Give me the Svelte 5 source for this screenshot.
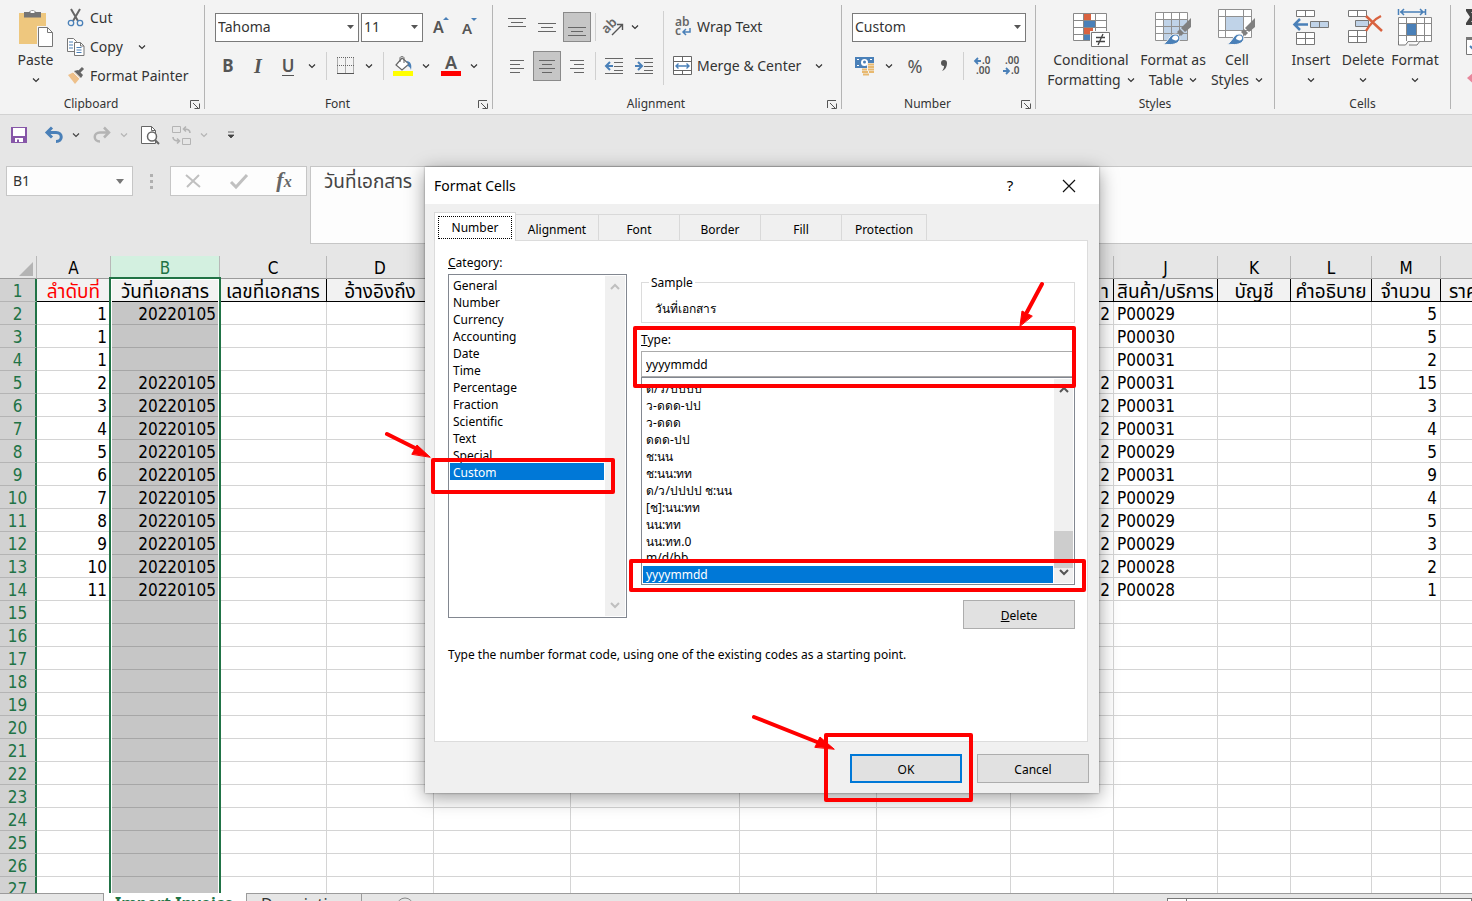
<script>
  const columns = [
    { id: 'A', width: 74, title: 'ลำดับที่' },
    { id: 'B', width: 109, title: 'วันที่เอกสาร' },
    { id: 'C', width: 107, title: 'เลขที่เอกสาร' },
    { id: 'D', width: 107, title: 'อ้างอิงถึง' },
    { id: 'E', width: 137, title: '' },
    { id: 'F', width: 169, title: '' },
    { id: 'G', width: 137, title: '' },
    { id: 'H', width: 134, title: '' },
    { id: 'I', width: 103, title: 'า' },
    { id: 'J', width: 104, title: 'สินค้า/บริการ' },
    { id: 'K', width: 73, title: 'บัญชี' },
    { id: 'L', width: 81, title: 'คำอธิบาย' },
    { id: 'M', width: 69, title: 'จำนวน' },
    { id: 'N', width: 120, title: 'ราคาต่อหน่วย' }
  ];
  const D = '20220105';
  const data = [
    { A: 1, B: D, I: 2, J: 'P00029', M: 5 },
    { A: 1, J: 'P00030', M: 5 },
    { A: 1, J: 'P00031', M: 2 },
    { A: 2, B: D, I: 2, J: 'P00031', M: 15 },
    { A: 3, B: D, I: 2, J: 'P00031', M: 3 },
    { A: 4, B: D, I: 2, J: 'P00031', M: 4 },
    { A: 5, B: D, I: 2, J: 'P00029', M: 5 },
    { A: 6, B: D, I: 2, J: 'P00031', M: 9 },
    { A: 7, B: D, I: 2, J: 'P00029', M: 4 },
    { A: 8, B: D, I: 2, J: 'P00029', M: 5 },
    { A: 9, B: D, I: 2, J: 'P00029', M: 3 },
    { A: 10, B: D, I: 2, J: 'P00028', M: 2 },
    { A: 11, B: D, I: 2, J: 'P00028', M: 1 }
  ];
  const rows = Array.from({ length: 26 }, (_, i) => data[i] ?? {});
  const categories = ['General', 'Number', 'Currency', 'Accounting', 'Date', 'Time', 'Percentage', 'Fraction', 'Scientific', 'Text', 'Special', 'Custom'];
  const formats = ['ด/ว/ปปปป', 'ว-ดดด-ปป', 'ว-ดดด', 'ดดด-ปป', 'ช:นน', 'ช:นน:ทท', 'ด/ว/ปปปป ช:นน', '[ช]:นน:ทท', 'นน:ทท', 'นน:ทท.0', 'm/d/bb', 'yyyymmdd'];
  const tabs = ['Number', 'Alignment', 'Font', 'Border', 'Fill', 'Protection'];
  let category = $state('Custom');
  let format = $state('yyyymmdd');
  let tab = $state('Number');
</script>

{#snippet chev()}
  <svg class="chev" width="8" height="6" viewBox="0 0 8 6"><path d="M1 1.5 4 4.5 7 1.5" fill="none" stroke="currentColor" stroke-width="1.2" /></svg>
{/snippet}

{#snippet foot(name, launch)}
  <div class="foot" class:launches={launch}>
    <span>{name}</span>
    {#if launch}
      <button class="launch" aria-label={name + ' settings'}>
        <svg width="11" height="10" viewBox="0 0 11 10"><path d="M.5 8V.5H9M3 3l5 5M9.500 3.500V8.500H4.500" fill="none" stroke="#555" /></svg>
      </button>
    {/if}
  </div>
{/snippet}

{#snippet lines(list)}
  <svg width="18" height="18" viewBox="0 0 18 18"><path d={list} stroke="#666" fill="none" /></svg>
{/snippet}

{#snippet brush()}
  <path d="M38 10v9l-6 5-4-4z" fill="#808080" /><path d="m27 21 4 4-3 3-4-4z" fill="#808080" />
  <path d="M10 36c5-1 6-10 12-10 4 0 6 4 4 7-3 4-9 4-16 3z" fill="#4a80b8" stroke="#f3f3f3" /><path d="M19 31c0-3 4-5 6-2 1 3-2 4-4 3" fill="#fff" />
{/snippet}

<div class="app">
  <div class="ribbon">
    <section class="group clipboard">
      <div class="body">
        <button class="big paste">
          <svg width="36" height="40" viewBox="21 8 36 40">
            <path d="M22 13h27v31H22z" fill="#eec77e" /><path d="M27 17.500V12h5a4 3.500 0 0 1 7 0h5v5.500z" fill="#757575" /><path d="M33.500 12h4" stroke="#fff" stroke-width="2" />
            <path d="M40 26h18v23H40z" fill="#f3f3f3" /><path d="M41.500 27.500h9l5 5v14h-14z" fill="#fff" stroke="#777" /><path d="M50.500 27.500v5h5" fill="none" stroke="#777" />
          </svg>
          <span>Paste</span><span>{@render chev()}</span>
        </button>
        <div class="stack">
          <button class="line">
            <svg width="18" height="18" viewBox="0 0 18 18"><path d="M4 0l7 12M13 0 6 12" stroke="#666" stroke-width="2" /><circle cx="4" cy="14" r="2.700" fill="none" stroke="#4a80b8" stroke-width="1.300" /><circle cx="13" cy="14" r="2.700" fill="none" stroke="#4a80b8" stroke-width="1.300" /></svg>
            Cut
          </button>
          <button class="line">
            <svg width="18" height="18" viewBox="0 0 18 18"><path d="M.5.5h6l3 3v10h-9z" fill="#fff" stroke="#777" /><path d="M2 4h4M2 7h4M2 10h4" stroke="#4a80b8" /><path d="M7.500 4.500h6l3.500 3.500v9.500H7.500z" fill="#fff" stroke="#777" /><path d="M13.500 4.500V8H17" fill="none" stroke="#777" /><path d="M9.500 9.500h5M9.500 12h5M9.500 14.500h5" stroke="#4a80b8" /></svg>
            Copy <i class="far">{@render chev()}</i>
          </button>
          <button class="line">
            <svg width="18" height="18" viewBox="0 0 18 18"><path d="m1 8 6-3 6 6-5 6z" fill="#eec08a" /><path d="m7 4 7 7 2-3-5-5z" fill="#666" /><path d="m12 5 4-4" stroke="#666" stroke-width="3" /><path d="m6 5 7 7" stroke="#f3f3f3" /></svg>
            Format Painter
          </button>
        </div>
      </div>
      {@render foot('Clipboard', true)}
    </section>

    <section class="group font">
      <div class="body rows">
        <div class="row">
          <select class="face" aria-label="Font"><option>Tahoma</option></select>
          <select class="size" aria-label="Font size"><option>11</option></select>
          <button class="tool" aria-label="Increase font size"><svg width="18" height="20" viewBox="0 0 18 20"><text x="2" y="16" font-size="16" font-weight="600" fill="#555">A</text><path d="M12 3l3-3 3 3z" fill="#4a80b8" /></svg></button>
          <button class="tool" aria-label="Decrease font size"><svg width="18" height="20" viewBox="0 0 18 20"><text x="3" y="17" font-size="15" font-weight="600" fill="#555">A</text><path d="M12 1h6l-3 3z" fill="#4a80b8" /></svg></button>
        </div>
        <div class="row tight">
          <button class="tool glyph"><b>B</b></button>
          <button class="tool glyph"><b class="ital">I</b></button>
          <button class="tool glyph"><b class="under">U</b></button>
          <button class="drop" aria-label="Underline styles">{@render chev()}</button>
          <hr />
          <button class="tool" aria-label="Borders"><svg width="18" height="18" viewBox="0 0 18 18"><path d="M.5.5v16M16.500.5v16M8.500.5v16M0 .5h17M0 8.500h17" stroke="#666" stroke-dasharray="1 1" /><path d="M0 16.500h17" stroke="#555" stroke-width="1" /></svg></button>
          <button class="drop" aria-label="Border styles">{@render chev()}</button>
          <hr />
          <button class="tool" aria-label="Fill colour"><svg width="20" height="20" viewBox="0 0 20 20"><path d="M0 15h20v5H0z" fill="#ff0" /><path d="m9 2 7 6-7 6-6-5z" fill="#fff" stroke="#666" stroke-width="1.200" /><path d="M7 6V2c0-2 4-2 4 0v5" fill="none" stroke="#666" /><path d="M13 5c5 0 6 4 5 9-1-3-2-4-4-4l2-2z" fill="#4a80b8" /></svg></button>
          <button class="drop" aria-label="Fill colours">{@render chev()}</button>
          <button class="tool ink" aria-label="Font colour"><svg width="20" height="20" viewBox="0 0 20 20"><text x="4" y="13" font-size="18" font-weight="600" fill="#555">A</text><path d="M0 15h20v5H0z" fill="red" /></svg></button>
          <button class="drop" aria-label="Font colours">{@render chev()}</button>
        </div>
      </div>
      {@render foot('Font', true)}
    </section>

    <section class="group alignment">
      <div class="body">
        <div class="rows">
          <div class="row aligns">
            <button class="tool" aria-label="Top align">{@render lines('M0 .5h18M3 4.500h12M0 8.500h18')}</button>
            <button class="tool" aria-label="Middle align">{@render lines('M0 5.500h18M3 9.500h12M0 13.500h18')}</button>
            <button class="tool on" aria-label="Bottom align">{@render lines('M0 9.500h18M3 13.500h12M0 17.500h18')}</button>
            <hr />
            <button class="tool" aria-label="Orientation"><svg width="20" height="18" viewBox="0 0 20 18"><text x="0" y="14" font-size="13" font-weight="600" fill="#666" transform="rotate(-45 4 12)">ab</text><path d="m8 17 10-10M13 6.500h5.500V12" fill="none" stroke="#555" stroke-width="1.400" /></svg></button>
            <button class="drop" aria-label="Orientation options">{@render chev()}</button>
          </div>
          <div class="row aligns">
            <button class="tool" aria-label="Align left">{@render lines('M2 3.500h14M2 7.500h10M2 11.500h14M2 15.500h10')}</button>
            <button class="tool on" aria-label="Center">{@render lines('M1 3.500h16M4 7.500h10M1 11.500h16M4 15.500h10')}</button>
            <button class="tool" aria-label="Align right">{@render lines('M2 3.500h14M6 7.500h10M2 11.500h14M6 15.500h10')}</button>
            <hr />
            <button class="tool" aria-label="Decrease indent"><svg width="18" height="18" viewBox="0 0 18 18"><path d="M0 1.500h18M9 5.500h9M9 9.500h9M9 13.500h9M0 16.500h18" stroke="#666" /><path d="M8 9H2M5 5 1 9l4 4" fill="none" stroke="#4a80b8" stroke-width="2" /></svg></button>
            <button class="tool" aria-label="Increase indent"><svg width="18" height="18" viewBox="0 0 18 18"><path d="M0 1.500h18M9 5.500h9M9 9.500h9M9 13.500h9M0 16.500h18" stroke="#666" /><path d="M0 9h6M3 5l4 4-4 4" fill="none" stroke="#4a80b8" stroke-width="2" /></svg></button>
          </div>
        </div>
        <hr class="tall" />
        <div class="rows wraps">
          <button class="row line">
            <svg width="20" height="20" viewBox="0 0 20 20"><text x="2" y="9" font-size="12" font-weight="600" fill="#666">ab</text><text x="2" y="18" font-size="12" font-weight="600" fill="#666">c</text><path d="M17 11v4h-6M13 12l-3 3 3 3" fill="none" stroke="#4a80b8" stroke-width="1.500" /></svg>
            Wrap Text
          </button>
          <button class="row line">
            <svg width="20" height="20" viewBox="0 0 20 20"><path d="M.5.5h18v18H.5zM.5 5.500h18M.5 14.500h18M9.500.5v5M9.500 14.500v4" fill="#fff" stroke="#666" /><path d="M3 10h13M5.500 7.500 3 10l2.500 2.500M13.500 7.500 16 10l-2.500 2.500" fill="none" stroke="#4a80b8" stroke-width="1.400" /></svg>
            Merge &amp; Center <i class="far">{@render chev()}</i>
          </button>
        </div>
      </div>
      {@render foot('Alignment', true)}
    </section>

    <section class="group number">
      <div class="body rows">
        <div class="row"><select class="fmt" aria-label="Number format"><option>Custom</option></select></div>
        <div class="row spaced">
          <button class="tool" aria-label="Accounting format"><svg width="20" height="20" viewBox="0 0 20 20"><path d="M0 1h19v11H0z" fill="#4a80b8" /><path d="M2 3.500h2M2 9.500h2M15 3.500h2" stroke="#fff" /><circle cx="9.500" cy="6.500" r="3.500" fill="#fff" /><circle cx="9.500" cy="6" r="1.500" fill="#4a80b8" /><path d="M12 7h8v7h-3v6H6v-8h6z" fill="#f3f3f3" /><path d="M13 8.500h6M13 11h6M13 13.500h6M7 13.500h5M7 16h6M8 18.500h6M14 16h5" stroke="#e8b970" stroke-width="1.800" /></svg></button>
          <button class="drop" aria-label="Accounting formats">{@render chev()}</button>
          <button class="tool pct">%</button>
          <button class="tool comma" aria-label="Comma style"><svg width="8" height="12" viewBox="0 0 8 12"><path d="M1 3a3 3 0 0 1 6 0c0 4-2 7-5 8 1.500-2 2-3 2-5-2 0-3-1-3-3z" fill="#555" /></svg></button>
          <hr />
          <button class="tool" aria-label="Increase decimal"><svg width="18" height="20" viewBox="0 0 18 20"><path d="M1 5h6M4 2 1 5l3 3" fill="none" stroke="#4a80b8" stroke-width="1.800" /><text x="8" y="8" font-size="10" font-weight="600" fill="#555">.0</text><text x="2" y="18" font-size="10" font-weight="600" fill="#555">.00</text></svg></button>
          <button class="tool" aria-label="Decrease decimal"><svg width="18" height="20" viewBox="0 0 18 20"><path d="M0 15h6M3 12l3 3-3 3" fill="none" stroke="#4a80b8" stroke-width="1.800" /><text x="2" y="8" font-size="10" font-weight="600" fill="#555">.00</text><text x="8" y="18" font-size="10" font-weight="600" fill="#555">.0</text></svg></button>
        </div>
      </div>
      {@render foot('Number', true)}
    </section>

    <section class="group styles">
      <div class="body">
        <button class="big">
          <svg width="40" height="40" viewBox="0 0 40 40"><path d="M2.500 5.500h33v27h-33z" fill="#fff" /><path d="M13 6h7v6h-7zM13 20h9v6h-9z" fill="#d9623f" /><path d="M13 13h11v6H13zM13 27h6v6h-6z" fill="#4a80b8" /><path d="M2.500 5.500h33v27h-33zM2.500 12.500h33M2.500 19.500h33M2.500 26.500h33M12.500 5.500v27M24.500 5.500v27" fill="none" stroke="#888" /><path d="M19 23h21v17H19z" fill="#f3f3f3" /><path d="M20.500 24.500h18v14h-18z" fill="#fff" stroke="#777" /><path d="M25 29.500h9M25 33.500h9M32 26l-5 11" stroke="#444" stroke-width="1.300" /></svg>
          <span>Conditional</span><span>Formatting {@render chev()}</span>
        </button>
        <button class="big">
          <svg width="40" height="40" viewBox="0 0 40 40"><path d="M2.500 4.500h32v28h-32z" fill="#fff" /><path d="M11 12h23v20H11z" fill="#c0d3e8" /><path d="M2.500 4.500h32v28h-32zM2.500 11.500h32M2.500 18.500h32M2.500 25.500h32M10.500 4.500v28M18.500 4.500v28M26.500 4.500v28" fill="none" stroke="#909090" />{@render brush()}</svg>
          <span>Format as</span><span>Table {@render chev()}</span>
        </button>
        <button class="big">
          <svg width="40" height="40" viewBox="0 0 40 40"><path d="M1.500 1.500h33v28h-33z" fill="#fff" /><path d="M9 9h17v13H9z" fill="#c0d3e8" /><path d="M1.500 1.500h33v28h-33zM1.500 8.500h33M1.500 22.500h33M8.500 1.500v28M26.500 1.500v28" fill="none" stroke="#909090" />{@render brush()}</svg>
          <span>Cell</span><span>Styles {@render chev()}</span>
        </button>
      </div>
      {@render foot('Styles', false)}
    </section>

    <section class="group cells">
      <div class="body">
        <button class="big">
          <svg width="38" height="40" viewBox="0 0 38 40"><path d="M4.500 2.500h18v6h-18zM13.500 2.500v6M4.500 24.500h18v12h-18zM4.500 30.500h18M13.500 24.500v12" fill="#fff" stroke="#777" /><path d="M18.500 13.500h18v6h-18zM27.500 13.500v6" fill="#c0d3e8" stroke="#777" /><path d="M3 16.500h13M8 11l-5.500 5.500L8 22" fill="none" stroke="#4a80b8" stroke-width="2.500" /></svg>
          <span>Insert</span><span>{@render chev()}</span>
        </button>
        <button class="big">
          <svg width="38" height="40" viewBox="0 0 38 40"><path d="M4.500 2.500h18v6h-18zM13.500 2.500v6M4.500 22.500h18v12h-18zM4.500 28.500h18M13.500 22.500v12" fill="#fff" stroke="#777" /><path d="M11.500 12.500h13v6h-13z" fill="#c0d3e8" stroke="#777" /><path d="m22 8 16 15M37 8c-6 3-11 8-15 15" fill="none" stroke="#d9623f" stroke-width="2.500" /></svg>
          <span>Delete</span><span>{@render chev()}</span>
        </button>
        <button class="big">
          <svg width="38" height="40" viewBox="0 0 38 40"><path d="M4 4h25M8 1 5 4l3 3M24 1l3 3-3 3M2.500 1v6M29.500 1v6" fill="none" stroke="#4a80b8" stroke-width="1.500" /><path d="M2.500 9.500h33v24h-33z" fill="#fff" /><path d="M2.500 9.500h33v24h-33zM2.500 15.500h33M2.500 27.500h33M10.500 9.500v24M20.500 9.500v24M28.500 9.500v24" fill="none" stroke="#888" /><path d="M11 16h9v11h-9z" fill="#4a80b8" /><path d="M2.500 33v4h7l3-4M13 37h8l3-4" fill="#fff" stroke="#777" /></svg>
          <span>Format</span><span>{@render chev()}</span>
        </button>
      </div>
      {@render foot('Cells', false)}
    </section>

    <section class="group editing">
      <svg width="20" height="100" viewBox="0 0 20 100"><path d="M0 9h12v3H5l4 5-4 5h7v3H0v-2l4-6-4-6z" fill="#444" /><path d="M.5 37.500h16v17H.5z" fill="#fff" stroke="#777" /><path d="M0 37h16v3H0z" fill="#777" /><path d="M8 43v7M4 46l4 4 4-4" fill="none" stroke="#4a80b8" stroke-width="2" /><path d="m1 78 7-6 7 7-6 6z" fill="#e8879c" /></svg>
    </section>
  </div>

  <div class="quick">
    <button class="qb" aria-label="Save"><svg width="16" height="16" viewBox="0 0 16 16"><path d="M0 0h16v16H0z" fill="#8757a8" /><path d="M2 1h12v8H2z" fill="#fff" /><path d="M4 11h8v4H4z" fill="#fff" /><path d="M6 12.500h2V15H6z" fill="#8757a8" /></svg></button>
    <button class="qb undo" aria-label="Undo"><svg width="18" height="16" viewBox="0 0 18 16"><path d="M2 5.500h9c7 0 7 9 0 9M7 .5l-5 5 5 5" fill="none" stroke="#4a80b8" stroke-width="3" /></svg></button>
    <button class="qb dropq" aria-label="Undo list">{@render chev()}</button>
    <button class="qb redo off" aria-label="Redo"><svg width="18" height="16" viewBox="0 0 18 16"><path d="M16 5.500H7c-7 0-7 9 0 9M11 .5l5 5-5 5" fill="none" stroke="#b4b4b4" stroke-width="2.500" /></svg></button>
    <button class="qb dropq off" aria-label="Redo list">{@render chev()}</button>
    <button class="qb preview" aria-label="Print preview"><svg width="19" height="19" viewBox="0 0 19 19"><path d="M.5.5h10l4 4v13H.5z" fill="#fff" stroke="#666" /><path d="M10.500.5v4h4" fill="none" stroke="#666" /><circle cx="11" cy="10.500" r="4.500" fill="#fff" stroke="#666" stroke-width="1.500" /><path d="m14 14 4 4" stroke="#666" stroke-width="2" /></svg></button>
    <button class="qb swap off" aria-label="Switch windows"><svg width="20" height="19" viewBox="0 0 20 19"><path d="M.5.5h8v6h-8zM10.500 12.500h8v6h-8z" fill="none" stroke="#b4b4b4" /><path d="M18 7c0-3-2-4-6-4M14 .5 11.500 3 14 5.500M1 11c0 3 2 4 6 4M5 12.500 7.500 15 5 17.500" fill="none" stroke="#b4b4b4" stroke-width="1.600" /></svg></button>
    <button class="qb dropq off" aria-label="Window list">{@render chev()}</button>
    <button class="qb more" aria-label="Customise toolbar"><svg width="6" height="8" viewBox="0 0 6 8"><path d="M0 1h6M0 4h6L3 7z" fill="#444" stroke="#444" stroke-width=".8" /></svg></button>
  </div>

  <div class="formula">
    <select class="name" aria-label="Name box"><option>B1</option></select>
    <span class="dots"><i></i><i></i><i></i></span>
    <div class="fx">
      <button aria-label="Cancel entry"><svg width="16" height="14" viewBox="0 0 16 14"><path d="m1 1 14 12M14 1 2 13" stroke="#c0c0c0" stroke-width="2" /></svg></button>
      <button aria-label="Accept entry"><svg width="18" height="14" viewBox="0 0 18 14"><path d="m1 8 5 5L17 1" fill="none" stroke="#c0c0c0" stroke-width="3" /></svg></button>
      <button class="fn"><em>f</em><em class="x">x</em></button>
    </div>
    <textarea aria-label="Formula" spellcheck="false">วันที่เอกสาร</textarea>
  </div>

  <div class="sheet">
    <table>
      <colgroup>
        <col class="nums" />
        {#each columns as c}<col style="width:{c.width}px" />{/each}
      </colgroup>
      <thead>
        <tr>
          <th class="corner"><svg width="16" height="16" viewBox="0 0 16 16"><path d="M15 1v14H1z" fill="#b4b4b4" /></svg></th>
          {#each columns as c}
            <th class:sel={c.id === 'B'}>{c.id}{#if c.id === 'B'}<span class="range"></span>{/if}</th>
          {/each}
        </tr>
      </thead>
      <tbody>
        <tr class="titles">
          <th>1</th>
          {#each columns as c}<td class={'c' + c.id}>{c.title}</td>{/each}
        </tr>
        {#each rows as r, i}
          <tr>
            <th>{i + 2}</th>
            {#each columns as c}<td class={'c' + c.id}>{r[c.id] ?? ''}</td>{/each}
          </tr>
        {/each}
      </tbody>
    </table>
  </div>

  <div class="sheets">
    <span class="lead"></span>
    <button class="current">Import Invoice</button>
    <button class="other">Description</button>
    <svg class="add" width="18" height="18" viewBox="0 0 18 18"><circle cx="9" cy="9" r="8" fill="none" stroke="#888" /><path d="M9 5v8M5 9h8" stroke="#888" /></svg>
    <span class="scroll"></span>
  </div>

  <div class="dialog" role="dialog" aria-label="Format Cells">
    <header>
      <span>Format Cells</span>
      <button class="help">?</button>
      <button aria-label="Close"><svg width="14" height="14" viewBox="0 0 14 14"><path d="m1 1 12 12M13 1 1 13" stroke="#111" stroke-width="1.200" /></svg></button>
    </header>
    <div class="tabs" role="tablist">
      {#each tabs as t}
        <button role="tab" aria-selected={tab === t} class:active={tab === t} onclick={() => (tab = t)}><span>{t}</span></button>
      {/each}
    </div>
    <div class="panel">
      <div class="cols">
        <div class="left">
          <label for="category"><u>C</u>ategory:</label>
          <div class="list">
            <select id="category" size="20" bind:value={category}>
              {#each categories as c}<option value={c}>{c}</option>{/each}
            </select>
            <div class="bar idle">
              <svg width="12" height="8" viewBox="0 0 12 8"><path d="m2 6 4-4 4 4" fill="none" stroke="#bfbfbf" stroke-width="2" /></svg>
              <svg width="12" height="8" viewBox="0 0 12 8"><path d="m2 2 4 4 4-4" fill="none" stroke="#bfbfbf" stroke-width="2" /></svg>
            </div>
          </div>
        </div>
        <div class="right">
          <fieldset><legend>Sample</legend>วันที่เอกสาร</fieldset>
          <label for="type"><u>T</u>ype:</label>
          <input id="type" type="text" bind:value={format} />
          <div class="list types">
            <select size="12" aria-label="Formats" bind:value={format}>
              {#each formats as f}<option value={f}>{f}</option>{/each}
            </select>
            <div class="bar">
              <svg width="12" height="8" viewBox="0 0 12 8"><path d="m2 6 4-4 4 4" fill="none" stroke="#555" stroke-width="2" /></svg>
              <span class="thumb"></span>
              <svg width="12" height="8" viewBox="0 0 12 8"><path d="m2 2 4 4 4-4" fill="none" stroke="#555" stroke-width="2" /></svg>
            </div>
          </div>
          <button class="push"><span><u>D</u>elete</span></button>
        </div>
      </div>
      <p>Type the number format code, using one of the existing codes as a starting point.</p>
    </div>
    <footer>
      <button class="push ok">OK</button>
      <button class="push">Cancel</button>
    </footer>
    <svg class="marks" viewBox="425 167 674 626" fill="none" stroke="red" stroke-width="4" stroke-linejoin="round" stroke-linecap="round">
      <rect x="635" y="328" width="439" height="58" />
      <rect x="631" y="561" width="453" height="29" />
      <rect x="433" y="460" width="180" height="32" />
      <rect x="826" y="735" width="145" height="65" />
      <path d="m1042 284-15 28M387 434l32 16M754 717l68 27" />
      <path d="m1020 326 2-15 10 5zM430 457l-13-12-5 9zM834 749l-14-12-5 10z" fill="red" stroke-width="1" />
    </svg>
  </div>
</div>

<style>
  :global(body) { margin: 0; overflow: hidden; }
  .app { position: relative; height: 100vh; display: flex; flex-direction: column; overflow: hidden; background: #e6e6e6; font: 14px/20px "Noto Sans", "Open Sans", sans-serif; color: #333; }
  * { box-sizing: border-box; }
  svg { display: block; flex: none; overflow: visible; }
  button { font: inherit; color: inherit; background: none; border: 0; padding: 0; margin: 0; }
  select { appearance: none; font: inherit; color: #333; border-radius: 0; outline: 0; }
  i { font-style: normal; }

  .ribbon { display: flex; height: 115px; flex: none; background: #f3f3f3; border-bottom: 1px solid #d2d2d2; overflow: hidden; }
  .group { flex: none; display: flex; flex-direction: column; position: relative; padding-right: 1px; background: linear-gradient(#b4b4b4, #b4b4b4) right 5px / 1px 104px no-repeat; }
  .clipboard { width: 205px; }
  .font { width: 288px; }
  .alignment { width: 349px; }
  .number { width: 194px; }
  .styles { width: 239px; }
  .cells { width: 176px; }
  .editing { flex: 1; background: none; padding-left: 15px; }
  .body { display: flex; height: 94px; }
  .rows { display: flex; flex-direction: column; gap: 9px; padding-top: 12px; }
  .row { display: flex; align-items: center; height: 30px; }
  .foot { height: 20px; display: flex; justify-content: center; align-items: center; font-size: 12px; position: relative; }
  .launches { padding-right: 22px; }
  .launch { position: absolute; right: 3px; top: 6px; }
  .big { display: flex; flex-direction: column; align-items: center; padding-top: 8px; }
  .big > svg { margin-bottom: 2px; }
  .big span { display: flex; align-items: center; justify-content: center; gap: 6px; height: 20px; white-space: nowrap; }
  .big.paste { width: 63px; padding-left: 8px; }
  .stack { display: flex; flex-direction: column; padding: 3px 0 0 4px; }
  .line { display: flex; align-items: center; gap: 5px; height: 29px; white-space: nowrap; }
  .far { padding-left: 10px; }
  .tool { width: 28px; height: 30px; flex: none; display: flex; align-items: center; justify-content: center; }
  .drop { width: 18px; height: 30px; flex: none; display: flex; align-items: center; justify-content: center; }
  hr { width: 1px; height: 28px; border: 0; background: #d0d0d0; margin: 0 4px; flex: none; }
  .ribbon select { height: 29px; border: 1px solid #7a7a7a; padding: 0 2px; background: #fff url("data:image/svg+xml,%3Csvg xmlns='http://www.w3.org/2000/svg' width='7' height='4'%3E%3Cpath d='M0 0h7L3.5 4z' fill='%23555'/%3E%3C/svg%3E") right 4px center no-repeat; }
  .font .body { padding-left: 8px; }
  .face { width: 144px; margin: 0 2px; }
  .size { width: 62px; margin-right: 3px; }
  .tight hr { margin: 0 5px; }
  .glyph { width: 30px; font-size: 17px; color: #555; }
  .ital { font-family: "Liberation Serif", serif; font-style: italic; font-size: 20px; }
  .under { border-bottom: 1px solid #555; line-height: 18px; font-weight: 600; }
  .ink { margin-left: 2px; }
  .alignment .body { padding-left: 10px; }
  .aligns { gap: 2px; width: 155px; }
  .aligns hr { margin: 0 2px; }
  .aligns .drop { margin-left: -4px; }
  .tool.on { background: #c6c6c6; border: 1px solid #8a8a8a; }
  hr.tall { height: 74px; margin: 11px 9px 0 5px; }
  .wraps .line { height: 30px; gap: 4px; }
  .number .body { padding-left: 9px; }
  .fmt { width: 174px; margin-left: 1px; }
  .spaced { gap: 1px; }
  .pct { font-size: 18px; color: #555; margin-left: 2px; }
  .styles .body { display: grid; grid-template-columns: 98px 66px 62px; padding-left: 6px; }
  .cells .body { padding-left: 10px; }
  .cells .big { width: 52px; }

  .quick { height: 40px; display: flex; align-items: center; padding-left: 5px; color: #444; flex: none; }
  .qb { height: 28px; width: 28px; display: flex; align-items: center; justify-content: center; }
  .undo { margin-left: 7px; }
  .dropq { width: 16px; }
  .redo, .preview, .swap { margin-left: 4px; }
  .more { margin-left: 5px; }
  .off { color: #b4b4b4; }

  .formula { display: flex; align-items: flex-start; padding: 11px 0 12px 6px; height: 101px; flex: none; }
  .name { width: 127px; height: 30px; border: 1px solid #c6c6c6; padding: 0 6px; background: #fdfdfd url("data:image/svg+xml,%3Csvg xmlns='http://www.w3.org/2000/svg' width='8' height='5'%3E%3Cpath d='M0 0h8L4 5z' fill='%23777'/%3E%3C/svg%3E") right 8px center no-repeat; }
  .dots { width: 37px; height: 30px; display: flex; flex-direction: column; align-items: center; justify-content: center; gap: 3px; }
  .dots i { width: 3px; height: 3px; background: #b0b0b0; }
  .fx { width: 137px; height: 30px; display: flex; justify-content: space-around; align-items: center; border: 1px solid #c6c6c6; background: #fdfdfd; }
  .fn { font: italic 700 22px/24px "Liberation Serif", serif; color: #666; }
  .fn .x { font-size: 16px; }
  textarea { flex: 1; height: 78px; margin-left: 3px; padding: 2px 13px; border: 1px solid #c6c6c6; border-right: 0; background: #fdfdfd; resize: none; font: 19px/24px "Noto Sans", "Noto Sans Thai", sans-serif; color: #444; outline: 0; }

  .sheet { flex: 1; min-height: 0; overflow: hidden; }
  table { table-layout: fixed; width: 1561px; border-collapse: separate; border-spacing: 0; font: 17px/20px "DejaVu Sans Condensed", "DejaVu Sans", "Noto Sans Thai", sans-serif; color: #000; background: #fff; }
  col.nums { width: 37px; }
  tr { height: 23px; }
  th, td { height: 23px; padding: 2px 3px 0; line-height: 20px; overflow: hidden; white-space: nowrap; font-weight: 400; border-right: 1px solid #d4d4d4; border-bottom: 1px solid #d4d4d4; text-align: right; }
  th { text-align: center; }
  thead th { background: #e6e6e6; border-right-color: #b8b8b8; border-bottom-color: #9b9b9b; }
  thead th.sel { position: relative; overflow: visible; background: #d3f0e0; color: #217346; }
  .range { position: absolute; left: -2px; right: -2px; top: 21px; height: 100vh; border: 2px solid #217346; outline: 1px solid #fff; outline-offset: -3px; pointer-events: none; z-index: 1; }
  thead th.corner { padding: 0; }
  .corner svg { margin: 3px 0 0 18px; }
  tbody th { background: #d2d2d2; color: #217346; border-right: 2px solid #217346; border-bottom-color: #b4b4b4; padding: 2px 0 0; }
  td.cB { background: #c6c6c6; border-bottom-color: #a6a6a6; }
  td.cJ { text-align: left; }
  .titles td { background: #f2f2f2; text-align: center; padding: 2px 0 0; border-right-color: #000; border-bottom-color: #000; font-size: 19px; }
  .titles td.cA { color: red; }
  .titles td.cI { text-align: right; padding-right: 4px; }

  .sheets { height: 8px; flex: none; display: flex; overflow: hidden; background: linear-gradient(#9b9b9b, #9b9b9b) 246px 0 / 100% 1px no-repeat #e6e6e6; }
  .lead { width: 104px; border-top: 1px solid #9b9b9b; border-right: 1px solid #9b9b9b; }
  .sheets button { height: 20px; line-height: 20px; flex: none; text-align: left; font-size: 16px; }
  .current { width: 142px; padding-left: 11px; background: #fff; color: #217346; font-weight: 700; }
  .other { width: 116px; border: 1px solid #9b9b9b; border-bottom: 0; padding-left: 14px; }
  .add { margin: 4px 0 0 34px; }
  .scroll { flex: 1; margin: 5px 0 0 753px; height: 4px; border: 1px solid #777; background: linear-gradient(#777, #777) 18px 0 / 1px 4px no-repeat #fff; }

  .dialog { position: absolute; left: 425px; top: 167px; width: 674px; background: #f0f0f0; color: #000; font-size: 12px; line-height: 17px; box-shadow: 0 4px 18px rgba(0, 0, 0, .4), 0 0 2px rgba(0, 0, 0, .4); z-index: 2; }
  header { height: 37px; background: #fff; display: flex; align-items: center; padding-left: 9px; font-size: 14px; }
  header span { flex: 1; }
  header button { width: 58px; height: 37px; display: flex; align-items: center; justify-content: center; }
  header .help { font-size: 15px; }
  header button:last-child { width: 60px; }
  .tabs { display: flex; align-items: flex-end; height: 36px; padding-left: 9px; }
  .tabs button { width: 81px; height: 26px; padding-top: 3px; border: 1px solid #d9d9d9; border-left: 0; border-bottom: 0; }
  .tabs button:nth-child(2) { width: 83px; }
  .tabs button:last-child { width: 85px; }
  .tabs .active { width: 82px; height: 29px; margin-bottom: -1px; padding: 3px; background: #fff; border-left: 1px solid #d9d9d9; position: relative; z-index: 1; }
  .active span { display: block; border: 1px dotted #000; height: 23px; line-height: 22px; }
  .panel { margin: 0 11px 0 9px; height: 502px; background: #fff; border: 1px solid #dcdcdc; padding: 13px 12px 0 13px; }
  .cols { display: flex; gap: 14px; }
  .left { width: 179px; }
  .left label { display: block; height: 20px; }
  .list { display: flex; height: 344px; border: 1px solid #828790; background: #fff; padding: 1px; }
  .list select { flex: 1; min-width: 0; border: 0; padding: 0; height: 100%; overflow: hidden; background: #fff; color: #000; scrollbar-width: none; }
  option { height: 17px; min-height: 17px; line-height: 17px; padding: 0 3px; }
  #category option { padding-top: 1px; }
  .list option:checked { background: linear-gradient(#0078d7, #0078d7); color: #fff; }
  .bar { width: 20px; background: #f0f0f0; display: flex; flex-direction: column; align-items: center; justify-content: space-between; padding: 7px 0; margin-left: 1px; }
  .types .bar { width: 19px; }
  .right { flex: 1; display: flex; flex-direction: column; }
  fieldset { margin: 20px 0 8px; border: 1px solid #dcdcdc; padding: 9px 13px 0; height: 49px; min-width: 0; }
  legend { padding: 0 2px; margin-left: -6px; }
  .right label { height: 20px; }
  .right input { height: 26px; border: 1px solid #ababab; padding: 0 4px; font: inherit; color: #000; outline: 0; }
  .types { height: 208px; }
  .thumb { width: 19px; height: 37px; background: #cdcdcd; margin-top: auto; }
  .push { width: 112px; height: 29px; padding-top: 1px; border: 1px solid #adadad; background: #e1e1e1; }
  .right .push { align-self: flex-end; margin-top: 15px; }
  .ok { border: 2px solid #0078d7; }
  p { margin: 17px 0 0; }
  footer { display: flex; justify-content: flex-end; gap: 15px; padding: 12px 10px 10px; }
  .marks { position: absolute; left: 0; top: 0; width: 100%; height: 626px; overflow: visible; pointer-events: none; }
</style>
